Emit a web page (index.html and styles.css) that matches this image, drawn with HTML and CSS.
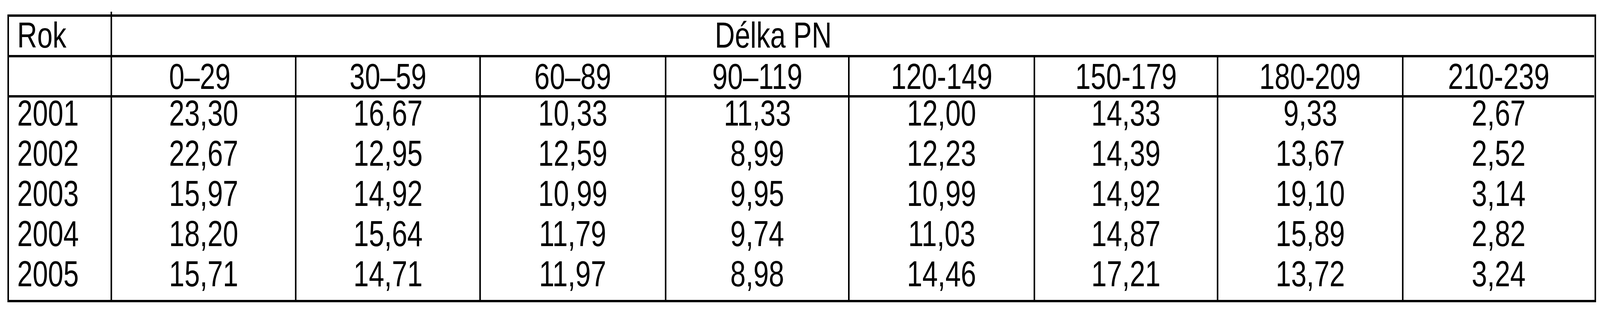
FILE: index.html
```html
<!DOCTYPE html>
<html lang="cs">
<head>
<meta charset="utf-8">
<title>Délka PN</title>
<link rel="stylesheet" href="styles.css">
</head>
<body>
<div class="table">
  <div class="cell head1 first"><span class="t">Rok</span></div>
  <div class="cell head1 span"><span class="t">Délka PN</span></div>

  <div class="cell head2 first"></div>
  <div class="cell head2 c0"><span class="t">0–29</span></div>
  <div class="cell head2"><span class="t">30–59</span></div>
  <div class="cell head2"><span class="t">60–89</span></div>
  <div class="cell head2"><span class="t">90–119</span></div>
  <div class="cell head2"><span class="t">120-149</span></div>
  <div class="cell head2"><span class="t">150-179</span></div>
  <div class="cell head2"><span class="t">180-209</span></div>
  <div class="cell head2 last"><span class="t">210-239</span></div>

  <div class="cell data first"><span class="t">2001</span></div>
  <div class="cell data"><span class="t">23,30</span></div>
  <div class="cell data"><span class="t">16,67</span></div>
  <div class="cell data"><span class="t">10,33</span></div>
  <div class="cell data"><span class="t">11,33</span></div>
  <div class="cell data"><span class="t">12,00</span></div>
  <div class="cell data"><span class="t">14,33</span></div>
  <div class="cell data"><span class="t">9,33</span></div>
  <div class="cell data last"><span class="t">2,67</span></div>

  <div class="cell data first"><span class="t">2002</span></div>
  <div class="cell data"><span class="t">22,67</span></div>
  <div class="cell data"><span class="t">12,95</span></div>
  <div class="cell data"><span class="t">12,59</span></div>
  <div class="cell data"><span class="t">8,99</span></div>
  <div class="cell data"><span class="t">12,23</span></div>
  <div class="cell data"><span class="t">14,39</span></div>
  <div class="cell data"><span class="t">13,67</span></div>
  <div class="cell data last"><span class="t">2,52</span></div>

  <div class="cell data first"><span class="t">2003</span></div>
  <div class="cell data"><span class="t">15,97</span></div>
  <div class="cell data"><span class="t">14,92</span></div>
  <div class="cell data"><span class="t">10,99</span></div>
  <div class="cell data"><span class="t">9,95</span></div>
  <div class="cell data"><span class="t">10,99</span></div>
  <div class="cell data"><span class="t">14,92</span></div>
  <div class="cell data"><span class="t">19,10</span></div>
  <div class="cell data last"><span class="t">3,14</span></div>

  <div class="cell data first"><span class="t">2004</span></div>
  <div class="cell data"><span class="t">18,20</span></div>
  <div class="cell data"><span class="t">15,64</span></div>
  <div class="cell data"><span class="t">11,79</span></div>
  <div class="cell data"><span class="t">9,74</span></div>
  <div class="cell data"><span class="t">11,03</span></div>
  <div class="cell data"><span class="t">14,87</span></div>
  <div class="cell data"><span class="t">15,89</span></div>
  <div class="cell data last"><span class="t">2,82</span></div>

  <div class="cell data first"><span class="t">2005</span></div>
  <div class="cell data"><span class="t">15,71</span></div>
  <div class="cell data"><span class="t">14,71</span></div>
  <div class="cell data"><span class="t">11,97</span></div>
  <div class="cell data"><span class="t">8,98</span></div>
  <div class="cell data"><span class="t">14,46</span></div>
  <div class="cell data"><span class="t">17,21</span></div>
  <div class="cell data"><span class="t">13,72</span></div>
  <div class="cell data last"><span class="t">3,24</span></div>
</div>
</body>
</html>
```

FILE: styles.css
```css
* { box-sizing: border-box; }

/* horizontal sizes are given in units of a 5380px wide canvas,
   so the table always fills the window width like the original */
:root {
  --u: calc(100vw / 5380);
  --k: tan(atan2(100vw, 5380px));
}

html, body {
  margin: 0;
  padding: 0;
  background: #ffffff;
  overflow: hidden;
}

body {
  font-family: "Liberation Sans", Arial, sans-serif;
  font-size: 93px;
  color: #000000;
}

.table {
  position: relative;
  display: grid;
  grid-template-columns:
    calc(347 * var(--u)) calc(620 * var(--u)) calc(620 * var(--u))
    calc(623 * var(--u)) calc(617 * var(--u)) calc(623 * var(--u))
    calc(617 * var(--u)) calc(622 * var(--u)) calc(641 * var(--u));
  grid-template-rows: 104px 103px 103px 103px 103px 103px 107px;
  width: calc(5342 * var(--u));
  margin: 37px 0 0 calc(25 * var(--u));
  border-style: solid;
  border-color: #000000;
  border-width: 6px calc(6 * var(--u));
}

/* the Rok divider sticks out a little above and below the frame */
.table::before {
  content: "";
  position: absolute;
  left: calc(341 * var(--u));
  top: -13px;
  width: calc(6 * var(--u));
  height: 751px;
  background: #000000;
}

.cell {
  border-right: calc(6 * var(--u)) solid #000000;
  text-align: center;
  white-space: nowrap;
}

.cell.last { border-right: none; }

.t {
  display: inline-block;
  transform: scaleX(var(--k));
  transform-origin: 50% 50%;
}

.cell.first {
  text-align: left;
  padding-left: calc(28 * var(--u));
}

.cell.first .t,
.head1.span .t {
  transform-origin: 0 50%;
}

.head1 {
  border-bottom: 6px solid #000000;
  line-height: 94px;
}

.head1.span {
  grid-column: span 8;
  border-right: none;
  text-align: left;
  padding-left: calc(2026 * var(--u));
}

.head2 {
  border-bottom: 6px solid #000000;
  line-height: 98px;
}

.head2.c0 {
  padding-right: calc(26 * var(--u));
}

.data {
  line-height: 81.5px;
}
```
